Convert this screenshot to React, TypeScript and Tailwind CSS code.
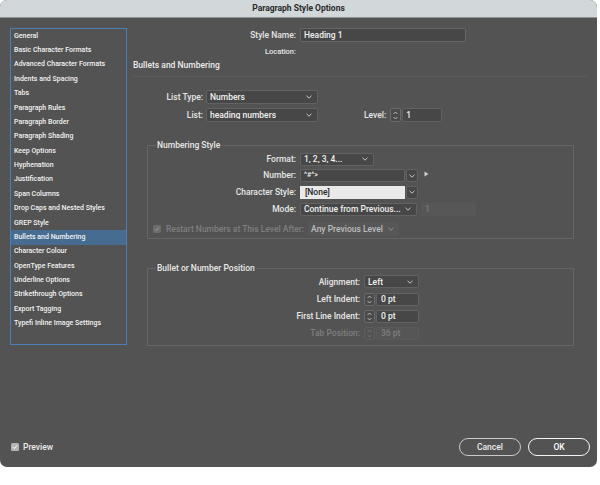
import React from "react";

const sections = [
  "General",
  "Basic Character Formats",
  "Advanced Character Formats",
  "Indents and Spacing",
  "Tabs",
  "Paragraph Rules",
  "Paragraph Border",
  "Paragraph Shading",
  "Keep Options",
  "Hyphenation",
  "Justification",
  "Span Columns",
  "Drop Caps and Nested Styles",
  "GREP Style",
  "Bullets and Numbering",
  "Character Colour",
  "OpenType Features",
  "Underline Options",
  "Strikethrough Options",
  "Export Tagging",
  "Typefi Inline Image Settings",
];

function Chevron({ dim = false }: { dim?: boolean }) {
  return (
    <svg width="6" height="4" viewBox="0 0 6 4" className="shrink-0">
      <polyline points="0.5,0.8 3,3.2 5.5,0.8" fill="none" stroke={dim ? "#9a9a9a" : "#d8d8d8"} strokeWidth="0.9" />
    </svg>
  );
}

function Spin({ dim = false }: { dim?: boolean }) {
  const c = dim ? "#7a7a7a" : "#cfcfcf";
  return (
    <div className={`flex h-full w-[11px] shrink-0 items-center justify-center rounded-[2px] border ${dim ? "border-[#5d5d5d]" : "border-[#6a6a6a] bg-[#4a4a4a]"}`}>
      <svg width="5" height="9" viewBox="0 0 5 9">
        <polyline points="0.6,3 2.5,1 4.4,3" fill="none" stroke={c} strokeWidth="0.8" />
        <polyline points="0.6,6 2.5,8 4.4,6" fill="none" stroke={c} strokeWidth="0.8" />
      </svg>
    </div>
  );
}

function Select({ value, w, dim = false }: { value: string; w: string; dim?: boolean }) {
  return (
    <div className={`flex h-full ${w} items-center justify-between rounded-[2px] border border-[#626262] bg-[#474747] pl-[3px] pr-[5px] ${dim ? "text-[#c4c4c4]" : "text-[#f0f0f0]"}`}>
      <span className="truncate">{value}</span>
      <Chevron dim={dim} />
    </div>
  );
}

function Stepper({ value, dim = false }: { value: string; dim?: boolean }) {
  return (
    <div className="flex h-full w-[55px] gap-[1px]">
      <Spin dim={dim} />
      <div className={`flex flex-1 items-center rounded-[2px] border pl-[4px] ${dim ? "border-[#5a5a5a] bg-[#565656] text-[#7e7e7e]" : "border-[#626262] bg-[#474747] text-[#f0f0f0]"}`}>
        {value}
      </div>
    </div>
  );
}

function Check({ dim = false }: { dim?: boolean }) {
  return (
    <div className={`flex h-[8px] w-[8px] items-center justify-center rounded-[1.5px] ${dim ? "bg-[#6c6c6c]" : "bg-[#b4b4b4]"}`}>
      <svg width="6" height="6" viewBox="0 0 6 6">
        <polyline points="1,3.2 2.4,4.6 5,1.4" fill="none" stroke={dim ? "#9c9c9c" : "#ffffff"} strokeWidth="1" />
      </svg>
    </div>
  );
}

function Row({ label, labelW, children, dim = false }: { label: string; labelW: string; children: React.ReactNode; dim?: boolean }) {
  return (
    <div className="flex h-[13px] items-center">
      <div className={`${labelW} shrink-0 pr-[4px] text-right ${dim ? "text-[#7e7e7e]" : "text-[#e6e6e6]"}`}>{label}</div>
      {children}
    </div>
  );
}

export default function App() {
  return (
    <div className="h-[485px] w-[600px] bg-white font-['Roboto','Liberation_Sans',Arial,sans-serif] text-[8.5px] font-medium leading-none">
      <div className="flex h-[467px] w-[597px] flex-col overflow-hidden rounded-[7px] bg-[#535353]">
        {/* title bar */}
        <div className="flex h-[18px] shrink-0 items-center justify-center border-b border-[#8f9496] bg-[#d2d7d9] text-[8.5px] font-bold text-[#2a2a2a]">
          Paragraph Style Options
        </div>

        <div className="flex flex-1 items-start pl-[10px] pt-[10px]">
          {/* section list */}
          <div className="flex h-[317px] w-[117px] shrink-0 flex-col border border-[#4c7fb6] text-[7px] text-[#f2f2f2]">
            {sections.map((s) => (
              <div
                key={s}
                className={`flex h-[14.38px] shrink-0 items-center pl-[3px] ${s === "Bullets and Numbering" ? "bg-[#466c91]" : ""}`}
              >
                {s}
              </div>
            ))}
          </div>

          {/* main panel */}
          <div className="ml-[6px] flex w-[455px] flex-col text-[#e6e6e6]">
            <div className="flex h-[14px] items-center">
              <div className="w-[167px] pr-[4px] text-right">Style Name:</div>
              <div className="flex h-full w-[166px] items-center rounded-[2px] border border-[#666] bg-[#474747] pl-[3px] text-[#f2f2f2]">Heading 1</div>
            </div>
            <div className="mt-[3px] flex h-[13px] items-center">
              <div className="w-[167px] pr-[4px] text-right text-[7.5px]">Location:</div>
            </div>
            <div className="mt-[0px] flex h-[14px] items-center text-[8.5px] text-[#ececec]">Bullets and Numbering</div>
            <div className="mt-[4px] h-[1px] w-[455px] bg-[#5b5b5b]" />

            <div className="mt-[13px] flex h-[14px] items-center">
              <div className="w-[73px] pr-[3px] text-right">List Type:</div>
              <Select value="Numbers" w="w-[112px]" />
            </div>
            <div className="mt-[4px] flex h-[14px] items-center">
              <div className="w-[73px] pr-[3px] text-right">List:</div>
              <Select value="heading numbers" w="w-[112px]" />
              <div className="ml-[46px] pr-[4px]">Level:</div>
              <div className="flex h-full w-[52px] gap-[1px]">
                <Spin />
                <div className="flex flex-1 items-center rounded-[2px] border border-[#626262] bg-[#474747] pl-[3px] text-[#f0f0f0]">1</div>
              </div>
            </div>

            {/* Numbering Style group */}
            <fieldset className="ml-[14px] mt-[16px] w-[427px] border border-[#656565] pb-[2px]">
              <legend className="ml-[8px] px-[1px] text-[8.5px] leading-[14px] text-[#e8e8e8]">Numbering Style</legend>
              <div className="flex flex-col gap-[3.7px] pt-[0.5px]">
                <Row label="Format:" labelW="w-[152px]">
                  <Select value="1, 2, 3, 4..." w="w-[74px]" />
                </Row>
                <Row label="Number:" labelW="w-[152px]">
                  <div className="flex h-full w-[105px] items-center rounded-[2px] border border-[#626262] bg-[#474747] pl-[3px] text-[7px] text-[#f0f0f0]">^#^&gt;</div>
                  <div className="ml-[1px] flex h-full w-[12px] items-center justify-center rounded-[2px] border border-[#626262] bg-[#474747]">
                    <Chevron />
                  </div>
                  <svg width="5" height="6" viewBox="0 0 5 6" className="-mt-[3px] ml-[6px]">
                    <polygon points="0.5,0.5 4.5,3 0.5,5.5" fill="#cfcfcf" />
                  </svg>
                </Row>
                <Row label="Character Style:" labelW="w-[152px]">
                  <div className="flex h-full w-[105px] items-center bg-[#e9e9e9] pl-[5px] text-[#262626]">[None]</div>
                  <div className="ml-[1px] flex h-full w-[12px] items-center justify-center rounded-[2px] border border-[#626262] bg-[#474747]">
                    <Chevron />
                  </div>
                </Row>
                <Row label="Mode:" labelW="w-[152px]">
                  <Select value="Continue from Previous..." w="w-[117px]" />
                  <div className="ml-[4px] flex h-full w-[55px] items-center bg-[#575757] pl-[4px] text-[#7a7a7a]">1</div>
                </Row>
                <div className="mt-[3px] flex h-[14px] items-center pl-[5px]">
                  <Check dim />
                  <span className="ml-[5px] text-[#7e7e7e]">Restart Numbers at This Level After:</span>
                  <div className="ml-[4px] flex h-full w-[91px] items-center justify-between rounded-[2px] bg-[#575757] pl-[3px] pr-[5px] text-[#bdbdbd]">
                    <span>Any Previous Level</span>
                    <Chevron dim />
                  </div>
                </div>
              </div>
            </fieldset>

            {/* Bullet or Number Position group */}
            <fieldset className="ml-[14px] mt-[22px] w-[427px] border border-[#656565] pb-[5px]">
              <legend className="ml-[8px] px-[1px] text-[8.5px] leading-[14px] text-[#e8e8e8]">Bullet or Number Position</legend>
              <div className="flex flex-col gap-[4.3px]">
                <Row label="Alignment:" labelW="w-[216px]">
                  <Select value="Left" w="w-[55px]" />
                </Row>
                <Row label="Left Indent:" labelW="w-[216px]">
                  <Stepper value="0 pt" />
                </Row>
                <Row label="First Line Indent:" labelW="w-[216px]">
                  <Stepper value="0 pt" />
                </Row>
                <Row label="Tab Position:" labelW="w-[216px]" dim>
                  <Stepper value="36 pt" dim />
                </Row>
              </div>
            </fieldset>
          </div>
        </div>

        {/* footer */}
        <div className="mb-[11px] flex h-[18px] items-center justify-between pl-[11px] pr-[7px]">
          <div className="flex items-center">
            <Check />
            <span className="ml-[4px] text-[#eaeaea]">Preview</span>
          </div>
          <div className="flex h-full items-center gap-[7px]">
            <button className="flex h-[18px] w-[62px] items-center justify-center rounded-full border border-[#c9c9c9] text-[#ececec]">Cancel</button>
            <button className="flex h-[18px] w-[62px] items-center justify-center rounded-full border-[1.5px] border-[#f4f4f4] text-[#ffffff]">OK</button>
          </div>
        </div>
      </div>
    </div>
  );
}
